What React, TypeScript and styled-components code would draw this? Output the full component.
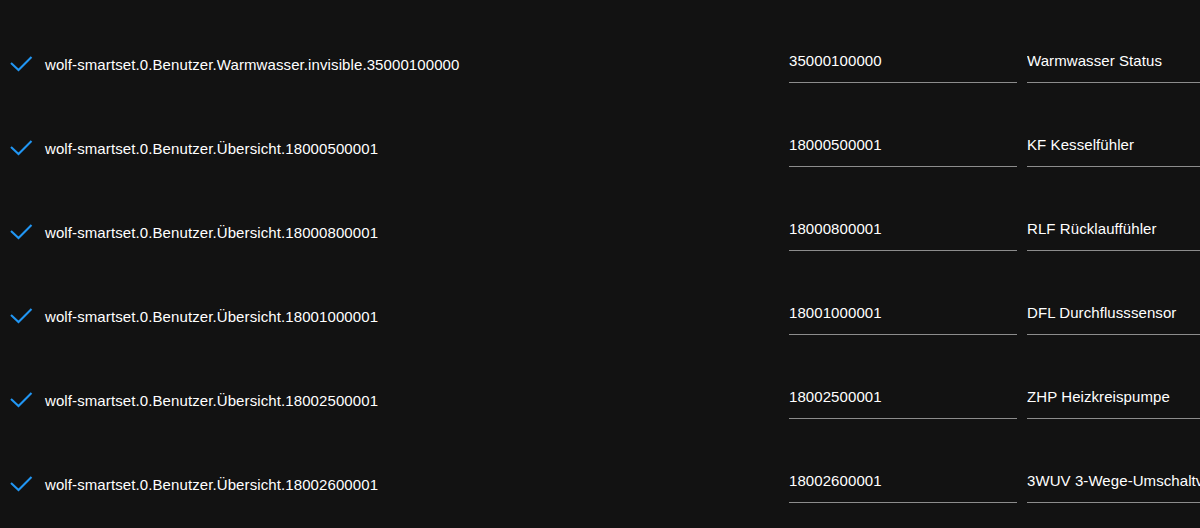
import React from "react";
import styled, { createGlobalStyle } from "styled-components";

const Global = createGlobalStyle`
  html, body { margin: 0; padding: 0; background: #121212; }
  body { font-family: "Liberation Sans", Arial, sans-serif; overflow: hidden; width: 1200px; height: 528px; }
`;

const List = styled.div`
  display: flex;
  flex-direction: column;
  padding-top: 22px;
  width: 1200px;
  overflow: hidden;
`;

const Row = styled.div`
  display: flex;
  align-items: flex-start;
  height: 84px;
  flex-shrink: 0;
`;

const CheckWrap = styled.div`
  width: 26px;
  height: 24px;
  margin: 30px 11px 0 8px;
  color: #2196f3;
  flex-shrink: 0;
`;

const IdLabel = styled.div`
  width: 744px;
  flex-shrink: 0;
  margin-top: 33px;
  font-size: 15px;
  line-height: 20px;
  letter-spacing: 0.1px;
  color: #ffffff;
  white-space: nowrap;
`;

const Field = styled.div<{ $w: number }>`
  width: ${(p) => p.$w}px;
  flex-shrink: 0;
  margin-top: 29px;
  padding-bottom: 11px;
  border-bottom: 1px solid #8c8c8c;
  font-size: 15px;
  line-height: 20px;
  letter-spacing: 0.08px;
  color: #ffffff;
  white-space: nowrap;
  overflow: hidden;
`;

const Gap = styled.div`
  width: 10px;
  flex-shrink: 0;
`;

const Check = () => (
  <svg width="26" height="24" viewBox="0 0 26 24" fill="none">
    <polyline
      points="3,11 10.5,18 23.5,5"
      stroke="currentColor"
      strokeWidth="2.1"
      strokeLinecap="butt"
      strokeLinejoin="miter"
    />
  </svg>
);

const rows = [
  ["wolf-smartset.0.Benutzer.Warmwasser.invisible.35000100000", "35000100000", "Warmwasser Status"],
  ["wolf-smartset.0.Benutzer.Übersicht.18000500001", "18000500001", "KF Kesselfühler"],
  ["wolf-smartset.0.Benutzer.Übersicht.18000800001", "18000800001", "RLF Rücklauffühler"],
  ["wolf-smartset.0.Benutzer.Übersicht.18001000001", "18001000001", "DFL Durchflusssensor"],
  ["wolf-smartset.0.Benutzer.Übersicht.18002500001", "18002500001", "ZHP Heizkreispumpe"],
  ["wolf-smartset.0.Benutzer.Übersicht.18002600001", "18002600001", "3WUV 3-Wege-Umschaltventil"],
];

export default function App() {
  return (
    <>
      <Global />
      <List>
        {rows.map(([id, num, name]) => (
          <Row key={id}>
            <CheckWrap>
              <Check />
            </CheckWrap>
            <IdLabel>{id}</IdLabel>
            <Field $w={228}>{num}</Field>
            <Gap />
            <Field $w={260}>{name}</Field>
          </Row>
        ))}
      </List>
    </>
  );
}
